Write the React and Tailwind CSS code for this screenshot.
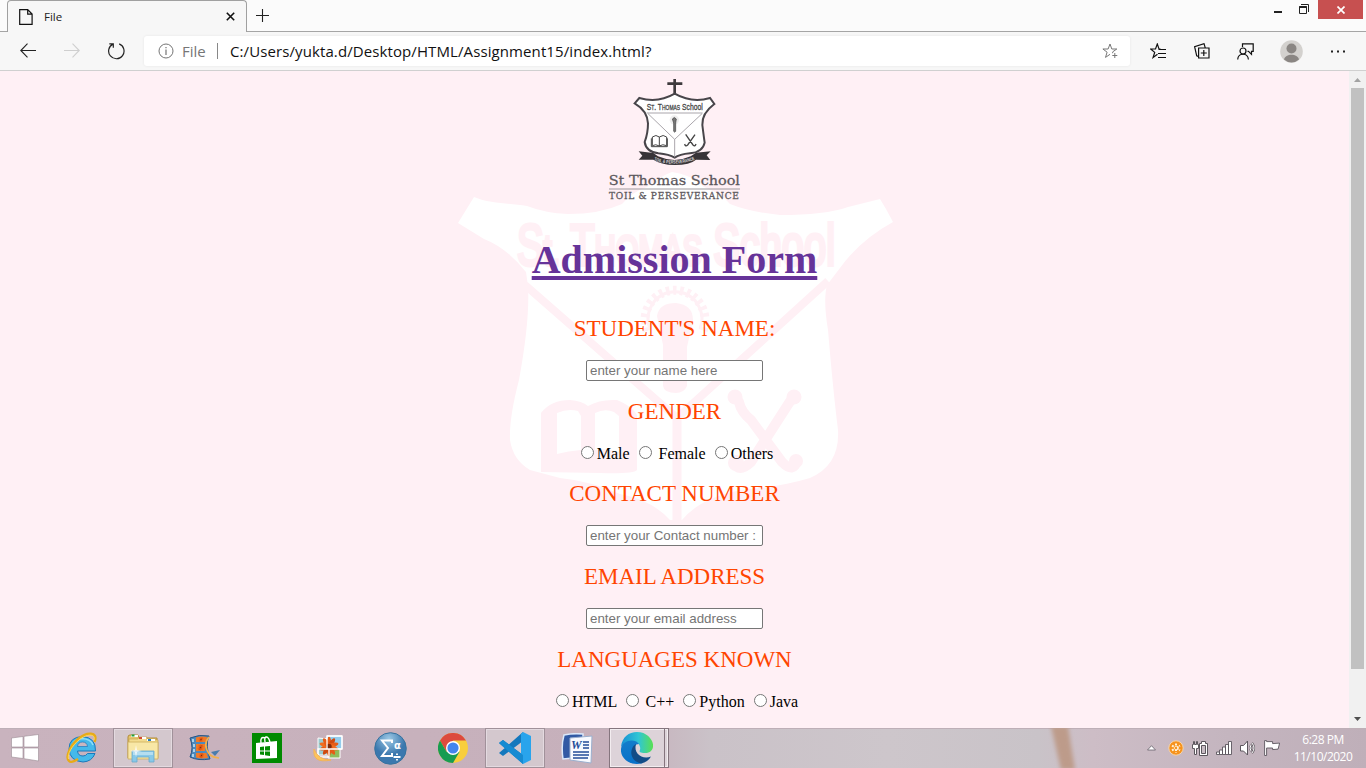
import React from "react";

const ui = "font-['Open_Sans','Noto_Sans',sans-serif]";

function TitleStrip() {
  return (
    <header className="flex h-8 shrink-0 items-start bg-[#fbfbfb]">
      <div className="h-8 w-[7px] border-b border-[#a5a5a5]" />
      <div className="flex h-8 w-[240px] items-center rounded-t-[4px] border border-b-0 border-[#a0a0a0] bg-[#f7f7f7] pl-[11px] pr-[11px]">
        <svg className="h-4 w-[14px]" viewBox="0 0 14 16" fill="none" stroke="#111" strokeWidth="1.2">
          <path d="M.7.7h8l4.4 4.4v10.2H.7zM8.7.7v4.4h4.4" />
        </svg>
        <span className="ml-[11px] text-[11.500px] text-[#222]">File</span>
        <svg className="ml-auto h-[9px] w-[9px]" viewBox="0 0 9 9" stroke="#111" strokeWidth="1.6">
          <path d="M.8.8l7.4 7.4M8.2.8L.8 8.2" />
        </svg>
      </div>
      <div className="flex h-8 flex-1 items-start border-b border-[#a5a5a5]">
        <svg className="ml-[9px] mt-[9px] h-[13px] w-[13px]" viewBox="0 0 13 13" stroke="#222" strokeWidth="1.1">
          <path d="M6.5 0v13M0 6.5h13" />
        </svg>
        <svg className="ml-auto mr-[17px] mt-[11px] h-[2px] w-[8px]" viewBox="0 0 8 2">
          <path fill="#222" d="M0 0h8v2H0z" />
        </svg>
        <svg className="mr-[9px] mt-[4px] h-[10px] w-[10px]" viewBox="0 0 10 10" fill="none" stroke="#222">
          <path d="M2 .5h7.5v7.500" />
          <path d="M.5 2.5h7v7h-7z" />
          <path d="M.5 3h7" strokeWidth="2" />
        </svg>
        <div className="flex h-[19px] w-[45px] items-center justify-center bg-[#c75050]">
          <svg className="h-[8px] w-[8px]" viewBox="0 0 8 8" stroke="#fff" strokeWidth="1.7">
            <path d="M.5.5l7 7M7.500.5l-7 7" />
          </svg>
        </div>
        <div className="w-[3px]" />
      </div>
    </header>
  );
}

function Toolbar() {
  return (
    <nav className={`flex h-[39px] shrink-0 items-center border-b border-[#d0d0d0] bg-[#f7f7f7] ${ui}`}>
      <svg className="ml-[20px] h-4 w-4" viewBox="0 0 16 16" fill="none" stroke="#222" strokeWidth="1.1">
        <path d="M7.500.7L.8 7.500l6.700 6.800M.8 7.500H16" />
      </svg>
      <svg className="ml-[28px] h-4 w-4" viewBox="0 0 16 16" fill="none" stroke="#cfcfcf" strokeWidth="1.1">
        <path d="M8.500.7l6.700 6.800-6.700 6.800M15.200 7.500H0" />
      </svg>
      <svg className="ml-[27px] h-[18px] w-[18px]" viewBox="0 0 18 18" fill="none" stroke="#222" strokeWidth="1.2">
        <path d="M12.200 1.900A7.700 7.700 0 1 1 6 2.100M2.300 1.800h4v4" />
      </svg>
      <div className="ml-[19px] flex h-[30px] w-[986px] items-center rounded-[3px] bg-white shadow-[0_0_3px_rgba(0,0,0,0.07)]">
        <svg className="ml-[14px] h-4 w-4" viewBox="0 0 16 16" fill="none" stroke="#757575">
          <circle cx="8" cy="8" r="7" />
          <path d="M8 6.500V12M8 4v1.300" strokeWidth="1.200" />
        </svg>
        <span className="ml-[8px] w-[26px] whitespace-nowrap text-[15px] text-[#767676]">File</span>
        <span className="ml-[9px] h-4 w-px bg-[#888]" />
        <span className="ml-[12px] whitespace-nowrap text-[15px] tracking-[0.1px] text-[#111]">
          C:/Users/yukta.d/Desktop/HTML/Assignment15/index.html?
        </span>
        <svg className="ml-auto mr-[12px] h-4 w-4" viewBox="0 0 16 16" fill="none" stroke="#777" strokeWidth="1">
          <path d="M10.500 10.200l.4-1.500L14.800 6H9.800L8 1 6.100 6H.9l4.200 3.200L3.500 14.400 8 11.300M12.800 10v5M10.300 12.500h5" />
        </svg>
      </div>
      <svg className="ml-[20px] h-4 w-4" viewBox="0 0 16 16" fill="none" stroke="#111" strokeWidth="1.200">
        <path d="M10.500 6H9L7.300 1 5.500 6H.7l4 3.400-1.600 5 4.400-3.200M8.500 6.500H16M8 10.500H16M8 14.500H16" />
      </svg>
      <svg className="ml-[28px] h-4 w-4" viewBox="0 0 16 16" fill="none" stroke="#111" strokeWidth="1.2">
        <path d="M4.600 5h10.400v10H4.600zM9.800 7v6M6.800 10h6M4.500 13.500l-1.800-.6L.6 3.600 10 .7l1.200 4" />
      </svg>
      <svg className="ml-[27px] h-[17px] w-[17px]" viewBox="0 0 17 17" fill="none" stroke="#111" strokeWidth="1.2">
        <path d="M5.500 4V.8h10.700v7.500h-1.700v3L11.500 8.300h-1" />
        <circle cx="6" cy="8" r="3" />
        <path d="M.7 16.500c.2-7 10.400-7 10.700 0" />
      </svg>
      <svg className="ml-[26px] h-[23px] w-[23px]" viewBox="0 0 23 23">
        <circle cx="11.500" cy="11.500" r="11.300" fill="#d3d1ce" />
        <circle cx="11.500" cy="8.500" r="5" fill="#8a8683" />
        <path d="M4 19.500c1-6.500 14-6.500 15 0a11 11 0 0 1-15 0" fill="#8a8683" />
      </svg>
      <svg className="ml-[28px] h-[3px] w-[15px]" viewBox="0 0 15 3" fill="#222">
        <path d="M0 .5h2v2H0zM6 .5h2v2H6zM12 .5h2v2h-2z" />
      </svg>
    </nav>
  );
}

function Watermark() {
  return (
    <svg className="absolute inset-0 h-[657px] w-[1349px]" viewBox="0 71 1349 657" aria-hidden="true">
      <path
        fill="#fff"
        d="M458 223L474 197C490 204 510 203 527 206Q545 213 568 214Q600 214 622 204Q632 192 647 187Q660 176 672 172Q690 174 704 187Q722 194 730 204Q750 212 780 215Q825 215 848 207L880 199L886 209L893 222Q860 240 840 268L827 285Q823 300 828 330Q833 390 838 430Q840 465 810 478Q780 487 741 490Q700 498 682 520H670Q652 500 620 494Q590 481 560 478L530 470Q513 460 510 440Q509 418 519 380Q530 320 528 286L526 272Q507 248 484 239Z"
      />
      <g fill="none" stroke="#fff0f5">
        <path d="M525 285L677 418M828 281L677 418" strokeWidth="8" />
        <path d="M677 418V520" strokeWidth="9" />
        <path d="M647 331A30 30 0 1 1 703 331" strokeWidth="9" strokeDasharray="3.500 3.500" />
        <path d="M650 329A27 27 0 1 1 700 329" strokeWidth="3" />
        <path d="M735 396L739 402Q741 412 751 420L782 462Q794 474 797 460M794 396L789 403L751 462Q738 474 735 462" strokeWidth="10" strokeLinecap="round" strokeLinejoin="round" />
      </g>
      <g fill="#fff0f5">
        <circle cx="735" cy="397" r="7.500" />
        <circle cx="794" cy="397" r="7.500" />
        <circle cx="736" cy="463" r="8" />
        <circle cx="796" cy="461" r="7" />
        <path d="M657 316Q659 303 676 303Q693 305 693 320L687 347V386Q684 393 676 393Q664 393 663 386V345Z" />
      </g>
      <path
        fill="#fff0f5"
        fillRule="evenodd"
        d="M541 413Q551 400 570 400Q582 401 588 406Q600 399 617 400Q632 406 637 415V470Q634 474 600 473L541 472ZM557 413Q568 408 578 411L581 416V450Q568 451 557 454ZM595 413Q605 408 614 412L619 416V452Q607 448 595 450Z"
      />
      <text x="517" y="265" textLength="318" lengthAdjust="spacingAndGlyphs" fill="#fff0f5" stroke="#fff0f5" strokeWidth="4" fontFamily="Liberation Sans Narrow, Liberation Sans, sans-serif" fontSize="57">
        S<tspan fontSize="42">t.</tspan> T<tspan fontSize="42">HOMAS</tspan> School
      </text>
    </svg>
  );
}

function SchoolLogo() {
  return (
    <svg className="h-[135px] w-[170px]" viewBox="0 3 510 405" role="img">
      <path d="M254 27v44M232 41h45" stroke="#3e3a3d" strokeWidth="8" />
      <path
        d="M134 100L148 84Q205 100 254 71Q305 100 360 84L373 102Q335 130 337 165Q342 205 344 218Q338 247 300 250Q268 253 254 263Q238 253 205 250Q168 245 164 216Q174 190 174 160Q172 122 134 100Z"
        fill="#fff"
        stroke="#48454a"
        strokeWidth="6"
      />
      <path d="M170 129H338M174 131L254 208L336 131M254 208V262" fill="none" stroke="#99949a" strokeWidth="2.500" />
      <text x="170" y="121" textLength="168" lengthAdjust="spacingAndGlyphs" fontFamily="Liberation Sans Narrow, Liberation Sans, sans-serif" fontSize="26" fill="#444" stroke="#444" strokeWidth="0.800">
        S<tspan fontSize="19">T</tspan>. T<tspan fontSize="19">HOMAS</tspan> School
      </text>
      <circle cx="253" cy="150" r="14" fill="#eee" />
      <path d="M247 147q6-9 12 0l-2 12v25q-3 5-6 0v-25z" fill="#777" stroke="#444" strokeWidth="2" />
      <path d="M187 201q11-9 21 0q12-9 22 0v26q-12-6-22 1q-11-7-21-1zM208 201v27M184 205v25h48v-25" fill="none" stroke="#444" strokeWidth="3" />
      <path d="M287 193l22 32q6 6 9-3M315 194l-22 31q-7 6-9-3" fill="none" stroke="#444" strokeWidth="4" />
      <path d="M146 244L190 249L204 259Q254 281 302 259L318 248L362 244L350 256L361 270L318 269Q300 285 254 285Q212 284 190 269H146L157 257Z" fill="#373438" />
      <path id="ribbon" d="M192 271Q254 292 317 268" fill="none" />
      <text fontFamily="Liberation Sans, sans-serif" fontWeight="700" fontSize="14" fill="#ddd">
        <textPath href="#ribbon" textLength="125" lengthAdjust="spacingAndGlyphs">TOIL &amp; PERSEVERANCE</textPath>
      </text>
      <text x="56" y="344" textLength="394" lengthAdjust="spacingAndGlyphs" fontFamily="DejaVu Serif, serif" fontSize="40" fill="#5b575b" stroke="#5b575b" strokeWidth="0.800">
        St Thomas School
      </text>
      <path d="M57 357H450" stroke="#8b878b" strokeWidth="2.500" />
      <text x="57" y="387" textLength="392" lengthAdjust="spacingAndGlyphs" letterSpacing="2" fontFamily="DejaVu Serif, serif" fontSize="25" fill="#5e5a5e" stroke="#5e5a5e" strokeWidth="0.800">
        TOIL &amp; PERSEVERANCE
      </text>
    </svg>
  );
}

function Label({ children, className }) {
  return <p className={`h-[26px] text-[23px] leading-[26px] text-[#ff4500] ${className}`}>{children}</p>;
}

function Field({ placeholder, className }) {
  return (
    <input
      placeholder={placeholder}
      className={`block h-[21px] w-[177px] rounded-[2px] border border-[#767676] bg-white px-[3px] font-['Liberation_Sans',Arial,sans-serif] text-[13.333px] placeholder:text-[#757575] ${className}`}
    />
  );
}

function Radio({ name }) {
  return <input type="radio" name={name} className="ml-[5px] mr-[3px] mt-[3px] h-[13px] w-[13px] align-baseline" />;
}

function AdmissionForm() {
  return (
    <div className="flex min-h-0 flex-1">
      <main className="relative w-[1349px] shrink-0 overflow-hidden bg-[#fff0f5] font-['Liberation_Serif','Times_New_Roman',serif] text-black">
        <Watermark />
        <form className="relative flex flex-col items-center">
          <SchoolLogo />
          <h1 className="mt-[31px] h-[46px] text-[40px] font-bold leading-[46px] text-[#663399] underline decoration-[4px] underline-offset-[3px]">Admission Form</h1>
          <Label className="mt-[33px]">STUDENT'S NAME:</Label>
          <Field className="mt-[18px]" placeholder="enter your name here" />
          <Label className="mt-[18px]">GENDER</Label>
          <p className="mt-[18px] h-[18px] text-[16px] leading-[18px]">
            <Radio name="g" />Male <Radio name="g" /> Female <Radio name="g" />Others
          </p>
          <Label className="mt-[20px]">CONTACT NUMBER</Label>
          <Field className="mt-[18px]" placeholder="enter your Contact number :" />
          <Label className="mt-[18px]">EMAIL ADDRESS</Label>
          <Field className="mt-[18px]" placeholder="enter your email address" />
          <Label className="mt-[18px]">LANGUAGES KNOWN</Label>
          <p className="mt-[18px] h-[18px] text-[16px] leading-[18px]">
            <Radio name="l" />HTML <Radio name="l" /> C++ <Radio name="l" />Python <Radio name="l" />Java
          </p>
        </form>
      </main>
      <div className="flex w-[17px] flex-col items-center bg-[#f1f1f1]">
        <svg className="mt-[7px] h-[4px] w-[7px] shrink-0" viewBox="0 0 7 4"><path d="M0 4L3.500 0L7 4z" fill="#a3a3a3" /></svg>
        <div className="mt-[6px] h-[581px] w-[13px] shrink-0 bg-[#c1c1c1]" />
        <svg className="mb-[7px] mt-auto h-[4px] w-[7px] shrink-0" viewBox="0 0 7 4"><path d="M0 0h7L3.500 4z" fill="#505050" /></svg>
      </div>
    </div>
  );
}

const IeIcon = () => (
  <svg className="h-8 w-8" viewBox="0 0 32 32" fill="none">
    <path d="M3 17Q3 5 16.500 4.500Q30 5.500 29.500 19H11.500Q12 24 17 24Q20 24 21.500 21.500H29Q26 29.500 17 30Q3.500 29 3 17Z" fill="#45b9ea" stroke="#1b79bb" strokeWidth="1" />
    <path d="M11.500 14.500Q12 10 16.500 10Q21 10 21.500 14.500Z" fill="#c9b6c0" stroke="#1b79bb" strokeWidth=".7" />
    <path d="M6 14Q8 7 16 6.500Q25 7 27 13" stroke="#90def8" strokeWidth="1.500" />
    <path d="M28.500 10C33-1 20 0 12 7C4 14-1 25 3 29C5 31 9 29 12 27" stroke="#e8ab17" strokeWidth="2.400" />
    <path d="M28 8C30 1 20 2 13 8C6 14 1 22 2.500 27" stroke="#ffda55" strokeWidth="1" />
  </svg>
);

const ExplorerIcon = () => (
  <svg className="h-8 w-8" viewBox="0 0 32 32">
    <path d="M1 5q0-2 2-2h8l1 3h18v20H1z" fill="#e5c56d" stroke="#b28c38" />
    <path d="M4 3h7v2H4z" fill="#fff" /><path d="M4.500 2.500h3v2h-3z" fill="#20a13a" />
    <path d="M2 7h9l1-2h8v3h11v18H2z" fill="#f3dc8e" stroke="#c49f49" strokeWidth=".6" />
    <path d="M12 5h7v2h-7zM20 7h8v2h-8z" fill="#fff" /><path d="M12 5h3v2h-3z" fill="#d34a35" /><path d="M21 7h3v2h-3z" fill="#247fbe" />
    <path d="M1 10h30v17H1z" fill="#f8e7a6" stroke="#cbae5d" strokeWidth=".8" />
    <path d="M5 30V19h22v11h-5v-5H10v5z" fill="#88c9e8" stroke="#6ba9cb" strokeWidth=".8" />
    <path d="M6 20h20v3H6z" fill="#b5def0" /><path d="M9 13l1 5 5 1-5 1-1 5-1-5-5-1 5-1z" fill="#fff" opacity=".75" />
  </svg>
);

const Flower = ({ x, y, s }) => (
  <g transform={`translate(${x} ${y}) scale(${s})`}>
    <g fill="#e65c17">
      <ellipse rx="2.400" ry="9" />
      <ellipse rx="2.400" ry="9" transform="rotate(36)" fill="#cf4a10" />
      <ellipse rx="2.400" ry="9" transform="rotate(72)" />
      <ellipse rx="2.400" ry="9" transform="rotate(108)" fill="#f06d20" />
      <ellipse rx="2.400" ry="9" transform="rotate(144)" />
    </g>
    <circle r="2.400" fill="#7e2c0c" />
  </g>
);

const MovieIcon = () => (
  <svg className="h-[30px] w-[32px]" viewBox="0 0 32 30">
    <path d="M1 5Q10 1 20 3Q16 12 21 26Q9 28 1 24Q5 15 1 5Z" fill="#4e8abd" stroke="#2a5584" />
    <path d="M7 4.500Q12 3 18 4L17 9H7zM7 11H16V18H7zM7 20H17.500L19 25Q12 26 7 24.500z" fill="#f07a28" />
    <Flower x={12} y={6.500} s={0.28} /><Flower x={11.500} y={14.500} s={0.36} /><Flower x={12.500} y={22.500} s={0.3} />
    <path d="M4 6v3M5 11v3M5 16v3M4 21v3" stroke="#c2e2f4" strokeWidth="1.600" />
    <path d="M20 4Q13 12 21 22Q25 25 30 25" fill="none" stroke="#f3b04d" strokeWidth="1.600" />
    <path d="M22 19l9-2-5 6z" fill="#4a7cab" />
  </svg>
);

const StoreIcon = () => (
  <svg className="h-[30px] w-[30px]" viewBox="0 0 30 30">
    <path d="M0 0h30v30H0z" fill="#008a00" />
    <path d="M4 10l21-2v17L4 26z" fill="#fff" />
    <path d="M9 10Q8 3 13 5Q16 2 18 9M13 9Q12 3 15 4" fill="none" stroke="#fff" strokeWidth="1.400" />
    <path d="M8 14l4-.5v4H8zm5-.6l5-.4v4.500h-5zM8 18.500h4v3.500l-4-.5zm5 0h5V23l-5-.7z" fill="#008a00" />
  </svg>
);

const PhotosIcon = () => (
  <svg className="h-8 w-8" viewBox="0 0 32 32">
    <path d="M5 6l12 1v16H5z" fill="#9bcbd0" stroke="#fff" /><path d="M14 4h15v13H14z" fill="#93ccec" stroke="#fff" />
    <path d="M15 17h12v9H15z" fill="#8fbd5c" stroke="#fff" />
    <Flower x={16} y={14.500} s={1.100} />
    <path d="M14 4h15v13H14zM5 17h11v8H5z" fill="none" stroke="#fff" strokeWidth="1.300" />
    <path d="M1 17Q-1 32 18 28Q5 28 1 17Z" fill="#ffc45b" stroke="#f2b45a" />
  </svg>
);

const SpssIcon = () => (
  <svg className="h-[33px] w-[33px]" viewBox="0 0 33 33">
    <defs><radialGradient id="orb" cx="45%" cy="20%"><stop stopColor="#9dc9e5" /><stop offset="1" stopColor="#3b78ae" /></radialGradient></defs>
    <circle cx="16.500" cy="16.500" r="15.800" fill="url(#orb)" stroke="#37739f" />
    <path d="M18 11V8.500H8l6 7.500-6 8h10v-3" fill="none" stroke="#fff" strokeWidth="2" />
    <text x="20" y="17" fontFamily="DejaVu Sans, sans-serif" fontWeight="700" fontSize="10" fill="#fff">α</text>
    <path d="M19.500 25h7M23 21.500v1.500M23 27v1.500" stroke="#fff" strokeWidth="1.800" />
  </svg>
);

const ChromeIcon = () => (
  <svg className="h-[30px] w-[30px]" viewBox="0 0 30 30">
    <circle cx="15" cy="15" r="15" fill="#f8ce3c" />
    <path d="M2 7.500A15 15 0 0 1 28 7.500H15L8.500 18.700z" fill="#dc4a3e" />
    <path d="M2 7.500A15 15 0 0 0 15 30L21.500 18.700 8.500 18.700z" fill="#179c52" />
    <circle cx="15" cy="15" r="7" fill="#fff" /><circle cx="15" cy="15" r="5.600" fill="#4385ee" />
  </svg>
);

const CodeIcon = () => (
  <svg className="h-8 w-8" viewBox="0 0 32 32">
    <path d="M0 21L24 0V9L4 24zM0 11l4-3 20 15v9z" fill="#1478bd" />
    <path d="M24 0l8 4v24l-8 4-2-2V2z" fill="#29a4ec" /><path d="M0 11l4-3 20 15v9z" fill="#168bd2" />
  </svg>
);

const WordIcon = () => (
  <svg className="h-[31px] w-[32px]" viewBox="0 0 32 31">
    <path d="M3 2Q12 0 22 1V24L2 26Q0 12 3 2z" fill="#3159a4" stroke="#dbe8fa" strokeWidth="1.500" />
    <path d="M9 5L31 3 30 30 9 27z" fill="#f8faff" stroke="#9bb0cf" />
    <path d="M22 9h6M22 12h6M22 15h6M12 19h16M12 22h16M12 25h15" stroke="#254e99" strokeWidth="1.500" />
    <text x="10" y="16" fontFamily="Liberation Serif, serif" fontWeight="700" fontStyle="italic" fontSize="12" fill="#234b99">W</text>
  </svg>
);

const EdgeIcon = () => (
  <svg className="h-8 w-8" viewBox="0 0 32 32">
    <defs>
      <linearGradient id="wave"><stop stopColor="#168fd5" /><stop offset=".55" stopColor="#30c6d4" /><stop offset="1" stopColor="#5ae052" /></linearGradient>
      <linearGradient id="deep" x2="0" y2="1"><stop stopColor="#127dcb" /><stop offset="1" stopColor="#0870c8" /></linearGradient>
    </defs>
    <path d="M0 15C1 5 8 0 16 0C27 0 33 9 32 15C31 21 25 22 20 20.500C17 19.500 20 18 19 15C17 7 5 8 0 15Z" fill="url(#wave)" />
    <path d="M0 17C1 8 14 6 18 12C10 12 8 27 22 31C9 35-1 26 0 17Z" fill="url(#deep)" />
    <path d="M15 12C9 15 7 28 20 31.500Q27 30 30 24.500C22 28 12 22 15 12Z" fill="#124c87" />
  </svg>
);

function TaskButton({ children, active, className }) {
  return (
    <div className={`flex h-[40px] shrink-0 items-center justify-center ${active ? "border border-[#a1919a] bg-[#d4c8ce] shadow-[inset_0_0_0_1px_#e4dae0]" : ""} ${className}`}>
      {children}
    </div>
  );
}

function Tray() {
  return (
    <div className={`flex h-[40px] items-center ${ui}`}>
      <svg className="h-[6px] w-[9px]" viewBox="0 0 9 6"><path d="M.5 5L4.500.7 8.500 5z" fill="#fff" stroke="#65616a" strokeWidth=".8" /></svg>
      <svg className="ml-[12px] h-[16px] w-[16px]" viewBox="0 0 16 16">
        <circle cx="8" cy="8" r="7.200" fill="#f6931d" stroke="#f5d4ac" />
        <path d="M8 3.500v9M4 5.700l8 4.600M4 10.300l8-4.600" stroke="#fff2dc" strokeWidth="2" strokeDasharray="2 .8" />
        <circle cx="8" cy="8" r="1.200" fill="#f6931d" />
      </svg>
      <svg className="ml-[8px] h-[17px] w-[16px]" viewBox="0 0 16 17" fill="none" stroke="#5b565d">
        <path d="M7.500 3.500h2v-2h4v2h2v12h-8z" fill="#fff" /><path d="M9.500 5.500h4v8h-4z" fill="#c9bdc5" />
        <path d="M1.500 1.500v3h-1v4h2v6h2v-6h2v-4h-1v-3h-1v3h-2v-3z" fill="#fff" />
      </svg>
      <svg className="ml-[8px] h-[14px] w-[17px]" viewBox="0 0 17 14" fill="#fff" stroke="#5b565d" strokeWidth=".9">
        <path d="M.5 11h3v2.500h-3zM3.500 9h3v4.500h-3zM6.500 6h3v7.500h-3zM9.500 3.500h3v10h-3zM12.500.5h3v13h-3z" />
      </svg>
      <svg className="ml-[7px] h-[16px] w-[16px]" viewBox="0 0 16 16" fill="none" stroke="#5b565d">
        <path d="M.5 5.500h3L7.500 1v14l-4-4h-3z" fill="#fff" /><path d="M10 5q2 3 0 6M12 3q4 5 0 10" stroke="#5b565d" strokeWidth="2.200" /><path d="M10 5q2 3 0 6M12 3q4 5 0 10" stroke="#fff" />
      </svg>
      <svg className="ml-[8px] h-[16px] w-[17px]" viewBox="0 0 17 16">
        <path d="M.6.6h2v1h6v2l7-.5-1.500 6-5.500.5V8h-6v7.500h-2z" fill="#fff" stroke="#5b565d" strokeWidth=".9" />
      </svg>
      <div className="ml-[12px] flex w-[60px] flex-col items-center whitespace-nowrap text-[12px] leading-[17px] tracking-[-0.5px] text-white">
        <span>6:28 PM</span>
        <span>11/10/2020</span>
      </div>
    </div>
  );
}

function Taskbar() {
  return (
    <footer className="relative flex h-10 shrink-0 items-center justify-between overflow-hidden bg-[linear-gradient(90deg,#c9b3be_0%,#c6b0bb_46%,#cac2c8_52%,#cdc6cb_65%,#c9c3c8_76%,#cdbdc6_80%,#c4b5bf_90%,#bfafb9_100%)] shadow-[inset_0_1px_0_#beafb7]">
      <svg className="absolute left-[1035px] top-0 h-10 w-[60px]" viewBox="0 0 60 40">
        <defs><filter id="soft"><feGaussianBlur stdDeviation="2" /></filter></defs>
        <path d="M16-2H33L40 42H26z" fill="#bd9b8a" filter="url(#soft)" />
      </svg>
      <div className="relative flex">
        <TaskButton className="w-[50px]">
          <svg className="h-[28px] w-[28px]" viewBox="0 0 28 28" fill="#fff" stroke="#9b8b94" strokeWidth=".6">
            <path d="M.5 4L12 2.500V13H.5zM13 2.300L27.500.5V13H13zM.5 14H12v10.500L.5 23zM13 14h14.500v13L13 24.700z" />
          </svg>
        </TaskButton>
        <TaskButton className="w-[63px]"><IeIcon /></TaskButton>
        <TaskButton active className="w-[60px]"><ExplorerIcon /></TaskButton>
        <TaskButton className="w-[63px]"><MovieIcon /></TaskButton>
        <TaskButton className="w-[62px]"><StoreIcon /></TaskButton>
        <TaskButton className="w-[62px]"><PhotosIcon /></TaskButton>
        <TaskButton className="w-[61px]"><SpssIcon /></TaskButton>
        <TaskButton className="w-[64px]"><ChromeIcon /></TaskButton>
        <TaskButton active className="w-[60px]"><CodeIcon /></TaskButton>
        <TaskButton className="w-[64px]"><WordIcon /></TaskButton>
        <div className="flex h-10 w-[60px] border border-[#85757e] bg-[#ddd3d9] shadow-[inset_0_0_0_1px_#f3edf0]">
          <div className="flex w-[55px] items-center justify-center border-r border-[#85757e] pr-[1px]"><EdgeIcon /></div>
        </div>
      </div>
      <div className="relative pr-[13px]"><Tray /></div>
    </footer>
  );
}

export default function App() {
  return (
    <div className="flex h-[768px] w-[1366px] flex-col overflow-hidden">
      <div className={ui}><TitleStrip /></div>
      <Toolbar />
      <AdmissionForm />
      <Taskbar />
    </div>
  );
}
